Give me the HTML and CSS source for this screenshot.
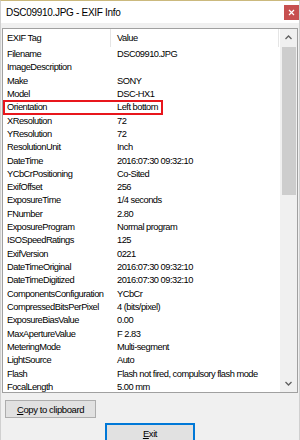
FILE: index.html
```html
<!DOCTYPE html>
<html lang="en">
<head>
    <meta charset="UTF-8" />
    <title>DSC09910.JPG - EXIF Info</title>
    <link rel="stylesheet" href="styles.css">
</head>
<body>
<div class="window">
    <div class="titlebar">
        <span class="title">DSC09910.JPG - EXIF Info</span>
        <span class="close">
            <svg width="7" height="7" viewBox="0 0 7 7"><path d="M1 1L6 6M6 1L1 6" stroke="#fff" stroke-width="1.2"/></svg>
        </span>
    </div>
    <div class="client">
        <div class="listbox">
            <div class="list">
                <div class="head">
                    <div class="col tag">EXIF Tag</div>
                    <div class="col value">Value</div>
                </div>
                <div class="rows">
                    <div class="row"><span class="tag">Filename</span><span class="value">DSC09910.JPG</span></div>
                    <div class="row"><span class="tag">ImageDescription</span><span class="value"></span></div>
                    <div class="row"><span class="tag">Make</span><span class="value">SONY</span></div>
                    <div class="row"><span class="tag">Model</span><span class="value">DSC-HX1</span></div>
                    <div class="row marked"><span class="tag">Orientation</span><span class="value">Left bottom</span></div>
                    <div class="row"><span class="tag">XResolution</span><span class="value">72</span></div>
                    <div class="row"><span class="tag">YResolution</span><span class="value">72</span></div>
                    <div class="row"><span class="tag">ResolutionUnit</span><span class="value">Inch</span></div>
                    <div class="row"><span class="tag">DateTime</span><span class="value">2016:07:30 09:32:10</span></div>
                    <div class="row"><span class="tag">YCbCrPositioning</span><span class="value">Co-Sited</span></div>
                    <div class="row"><span class="tag">ExifOffset</span><span class="value">256</span></div>
                    <div class="row"><span class="tag">ExposureTime</span><span class="value">1/4 seconds</span></div>
                    <div class="row"><span class="tag">FNumber</span><span class="value">2.80</span></div>
                    <div class="row"><span class="tag">ExposureProgram</span><span class="value">Normal program</span></div>
                    <div class="row"><span class="tag">ISOSpeedRatings</span><span class="value">125</span></div>
                    <div class="row"><span class="tag">ExifVersion</span><span class="value">0221</span></div>
                    <div class="row"><span class="tag">DateTimeOriginal</span><span class="value">2016:07:30 09:32:10</span></div>
                    <div class="row"><span class="tag">DateTimeDigitized</span><span class="value">2016:07:30 09:32:10</span></div>
                    <div class="row"><span class="tag">ComponentsConfiguration</span><span class="value">YCbCr</span></div>
                    <div class="row"><span class="tag">CompressedBitsPerPixel</span><span class="value">4 (bits/pixel)</span></div>
                    <div class="row"><span class="tag">ExposureBiasValue</span><span class="value">0.00</span></div>
                    <div class="row"><span class="tag">MaxApertureValue</span><span class="value">F 2.83</span></div>
                    <div class="row"><span class="tag">MeteringMode</span><span class="value">Multi-segment</span></div>
                    <div class="row"><span class="tag">LightSource</span><span class="value">Auto</span></div>
                    <div class="row"><span class="tag">Flash</span><span class="value">Flash not fired, compulsory flash mode</span></div>
                    <div class="row"><span class="tag">FocalLength</span><span class="value">5.00 mm</span></div>
                </div>
            </div>
            <div class="scrollbar">
                <div class="arrow">
                    <svg width="7" height="5" viewBox="0 0 7 5"><path d="M0.5 4L3.5 1L6.5 4" fill="none" stroke="#606060" stroke-width="1.3"/></svg>
                </div>
                <div class="thumb"></div>
                <div class="track"></div>
                <div class="arrow">
                    <svg width="7" height="5" viewBox="0 0 7 5"><path d="M0.5 1L3.5 4L6.5 1" fill="none" stroke="#606060" stroke-width="1.3"/></svg>
                </div>
            </div>
        </div>
        <div class="buttons">
            <button class="btn copy-btn"><u>C</u>opy to clipboard</button>
            <button class="btn exit-btn"><u>E</u>xit</button>
        </div>
    </div>
</div>
</body>
</html>
```

FILE: styles.css
```css
body {
    margin: 0;
    background-color: #f0f0f0;
    font-family: 'Liberation Sans', Arial, sans-serif;
    font-size: 9.3px;
    letter-spacing: -0.5px;
    color: #000;
}

.window {
    width: 300px;
    height: 440px;
    box-sizing: border-box;
    border-top: 1px solid #cbb97d;
    border-left: 1px solid #d0d0d0;
    border-right: 1px solid #d0d0d0;
    overflow: hidden;
}

.titlebar {
    height: 22px;
    background-color: #fff;
    display: flex;
    align-items: center;
    justify-content: space-between;
    padding-left: 5px;
}

.title {
    font-size: 10px;
    letter-spacing: -0.3px;
}

.close {
    width: 15px;
    height: 15px;
    background-color: #c75050;
    display: flex;
    align-items: center;
    justify-content: center;
}

.client {
    padding-top: 5px;
}

.listbox {
    margin-left: 1px;
    width: 296px;
    height: 365px;
    box-sizing: border-box;
    border: 1px solid #a0a0a0;
    background-color: #fff;
    display: flex;
    overflow: hidden;
}

.list {
    flex: 1;
    overflow: hidden;
}

.head {
    height: 19px;
    display: flex;
}

.head .col {
    height: 18px;
    line-height: 18px;
    border-right: 1px solid #e5e5e5;
}

.head .tag {
    width: 103px;
    padding-left: 4px;
}

.head .value {
    width: 161px;
    padding-left: 6px;
}

.row {
    height: 13.32px;
    line-height: 13.32px;
    display: flex;
    white-space: nowrap;
}

.row .tag {
    width: 104px;
    padding-left: 4px;
    flex-shrink: 0;
}

.row .value {
    padding-left: 6px;
}

.marked {
    position: relative;
}

.marked::after {
    content: "";
    position: absolute;
    left: 0;
    top: -1px;
    width: 156px;
    height: 11px;
    border: 2px solid #e8161c;
}

.scrollbar {
    width: 17px;
    background-color: #f0f0f0;
    display: flex;
    flex-direction: column;
}

.arrow {
    height: 17px;
    display: flex;
    align-items: center;
    justify-content: center;
}

.thumb {
    height: 148px;
    margin: 1px 1px 0 2px;
    background-color: #cdcdcd;
}

.track {
    flex: 1;
}

.buttons {
    display: flex;
    flex-direction: column;
    align-items: flex-start;
    padding: 7px 0 0 4px;
    gap: 5px;
}

.btn {
    font-family: inherit;
    font-size: 9.5px;
    letter-spacing: -0.4px;
    color: #000;
    background-color: #e1e1e1;
    border: 1px solid #adadad;
    height: 18px;
    padding: 0;
}

.copy-btn {
    width: 91px;
}

.exit-btn {
    width: 90px;
    height: 20px;
    margin-left: 100px;
    border: 2px solid #0078d7;
}
```
